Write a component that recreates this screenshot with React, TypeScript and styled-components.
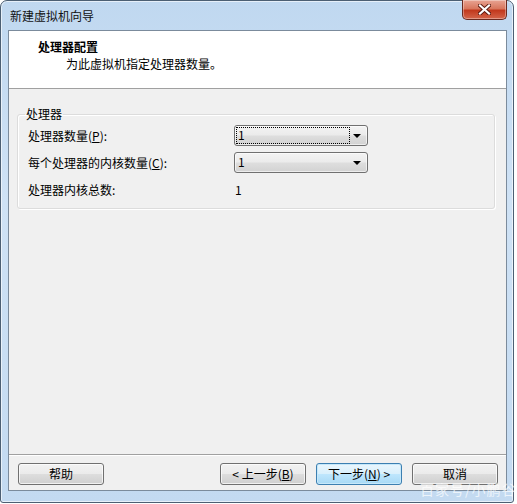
import styled, { createGlobalStyle } from 'styled-components'

const GlobalStyle = createGlobalStyle`
  html, body {
    margin: 0;
    padding: 0;
    background: #ffffff;
  }
  * {
    box-sizing: border-box;
  }
  body {
    font-family: "Noto Sans CJK SC", "Noto Sans", sans-serif;
    font-size: 12px;
    color: #000;
  }
`

const Page = styled.div`
  position: relative;
`

const Window = styled.div`
  width: 514px;
  height: 503px;
  display: flex;
  flex-direction: column;
  border: 1px solid #4c5f73;
  border-radius: 7px 7px 3px 3px;
  background: linear-gradient(180deg, #c0d8f0 0%, #cfe2f5 40%, #c3daf1 100%);
  box-shadow: inset 0 0 0 1px rgba(255, 255, 255, 0.6);
`

const TitleBar = styled.div`
  height: 29px;
  display: flex;
  align-items: flex-start;
  justify-content: space-between;
  padding-left: 9px;
  flex-shrink: 0;
`

const TitleText = styled.span`
  line-height: 30px;
  font-size: 12px;
  color: #111;
`

const CloseButton = styled.div`
  width: 45px;
  height: 20px;
  margin-right: 6px;
  margin-top: -1px;
  border: 1px solid #6a2a20;
  border-top: none;
  border-radius: 0 0 5px 5px;
  background: linear-gradient(180deg, #e8a493 0%, #d8775e 45%, #c2391d 55%, #d4654a 100%);
  box-shadow: inset 0 0 0 1px rgba(255, 255, 255, 0.35);
  display: flex;
  align-items: center;
  justify-content: center;
`

const Client = styled.div`
  flex: 1;
  margin: 0 6px 11px 7px;
  border: 1px solid #7b8b9c;
  display: flex;
  flex-direction: column;
  background: #f0f0f0;
`

const Header = styled.div`
  height: 58px;
  background: #ffffff;
  border-bottom: 1px solid #a0a0a0;
  padding: 7px 0 0 29px;
  flex-shrink: 0;
`

const HeaderTitle = styled.div`
  font-weight: 700;
  font-size: 12px;
  line-height: 17px;
`

const HeaderSub = styled.div`
  padding-left: 28px;
  line-height: 17px;
`

const Body = styled.div`
  flex: 1;
  padding: 17px 11px 0 8px;
`

const Group = styled.fieldset`
  margin: 0;
  padding: 0 10px 5px 10px;
  border: 1px solid #dcdcdc;
  border-radius: 3px;
  box-shadow: inset 1px 1px 0 #ffffff, 1px 1px 0 #ffffff;
  display: flex;
  flex-direction: column;
`

const Legend = styled.legend`
  padding: 0 1px;
  margin-left: -3px;
  line-height: 16px;
`

const Row = styled.div`
  display: grid;
  grid-template-columns: 206px 134px;
  align-items: center;
  height: 27px;
`

const Combo = styled.div`
  height: 21px;
  border: 1px solid #707070;
  border-radius: 3px;
  background: linear-gradient(180deg, #f3f3f3 0%, #ebebeb 48%, #dedede 52%, #d2d2d2 100%);
  display: flex;
  align-items: center;
  padding: 0 2px 0 2px;
  box-shadow: inset 0 0 0 1px rgba(255, 255, 255, 0.6);
`

const ComboText = styled.span<{ $focused?: boolean }>`
  width: 112px;
  height: 15px;
  line-height: 14px;
  padding-left: 1px;
  outline: ${(p) => (p.$focused ? '1px dotted #000' : 'none')};
  font-size: 12px;
`

const Arrow = styled.span`
  margin-left: auto;
  margin-right: 4px;
  width: 0;
  height: 0;
  border-left: 4px solid transparent;
  border-right: 4px solid transparent;
  border-top: 4px solid #000;
`

const Value = styled.span`
  padding-left: 1px;
`

const Footer = styled.div`
  height: 36px;
  border-top: 1px solid #a0a0a0;
  box-shadow: inset 0 1px 0 #ffffff;
  display: flex;
  align-items: flex-start;
  padding: 8px 8px 0 9px;
  gap: 10px;
  flex-shrink: 0;
`

const Button = styled.div<{ $default?: boolean }>`
  width: 86px;
  height: 22px;
  border: 1px solid ${(p) => (p.$default ? '#3c7fb1' : '#707070')};
  border-radius: 3px;
  background: ${(p) =>
    p.$default
      ? 'linear-gradient(180deg, #eaf6fd 0%, #d9f0fc 48%, #bee6fd 52%, #a7d9f5 100%)'
      : 'linear-gradient(180deg, #f2f2f2 0%, #ebebeb 48%, #dddddd 52%, #cfcfcf 100%)'};
  box-shadow: inset 0 0 0 1px ${(p) => (p.$default ? '#c6e8fa' : 'rgba(255,255,255,0.7)')};
  display: flex;
  align-items: center;
  justify-content: center;
  line-height: 20px;
  font-size: 12px;
`

const Spacer = styled.div`
  flex: 1;
`

const Key = styled.span`
  text-decoration: underline;
`

const Watermark = styled.span`
  position: absolute;
  left: 420px;
  top: 480px;
  color: rgba(255, 255, 255, 0.7);
  font-size: 14px;
  line-height: 18px;
  letter-spacing: 1px;
  pointer-events: none;
`

export default function App() {
  return (
    <Page>
      <GlobalStyle />
      <Window>
        <TitleBar>
          <TitleText>新建虚拟机向导</TitleText>
          <CloseButton>
            <svg width="13" height="11" viewBox="0 0 13 11">
              <path
                d="M2 1.5 L11 9.5 M11 1.5 L2 9.5"
                stroke="#5a1a10"
                strokeWidth="4"
                strokeLinecap="square"
              />
              <path
                d="M2 1.5 L11 9.5 M11 1.5 L2 9.5"
                stroke="#ffffff"
                strokeWidth="2.2"
                strokeLinecap="square"
              />
            </svg>
          </CloseButton>
        </TitleBar>
        <Client>
          <Header>
            <HeaderTitle>处理器配置</HeaderTitle>
            <HeaderSub>为此虚拟机指定处理器数量。</HeaderSub>
          </Header>
          <Body>
            <Group>
              <Legend>处理器</Legend>
              <Row>
                <span>
                  处理器数量(<Key>P</Key>):
                </span>
                <Combo>
                  <ComboText $focused>1</ComboText>
                  <Arrow />
                </Combo>
              </Row>
              <Row>
                <span>
                  每个处理器的内核数量(<Key>C</Key>):
                </span>
                <Combo>
                  <ComboText>1</ComboText>
                  <Arrow />
                </Combo>
              </Row>
              <Row>
                <span>处理器内核总数:</span>
                <Value>1</Value>
              </Row>
            </Group>
          </Body>
          <Footer>
            <Button>帮助</Button>
            <Spacer />
            <Button>
              &lt; 上一步(<Key>B</Key>)
            </Button>
            <Button $default>
              下一步(<Key>N</Key>) &gt;
            </Button>
            <Button>取消</Button>
          </Footer>
        </Client>
      </Window>
      <Watermark>百家号/小鹏谷</Watermark>
    </Page>
  )
}
